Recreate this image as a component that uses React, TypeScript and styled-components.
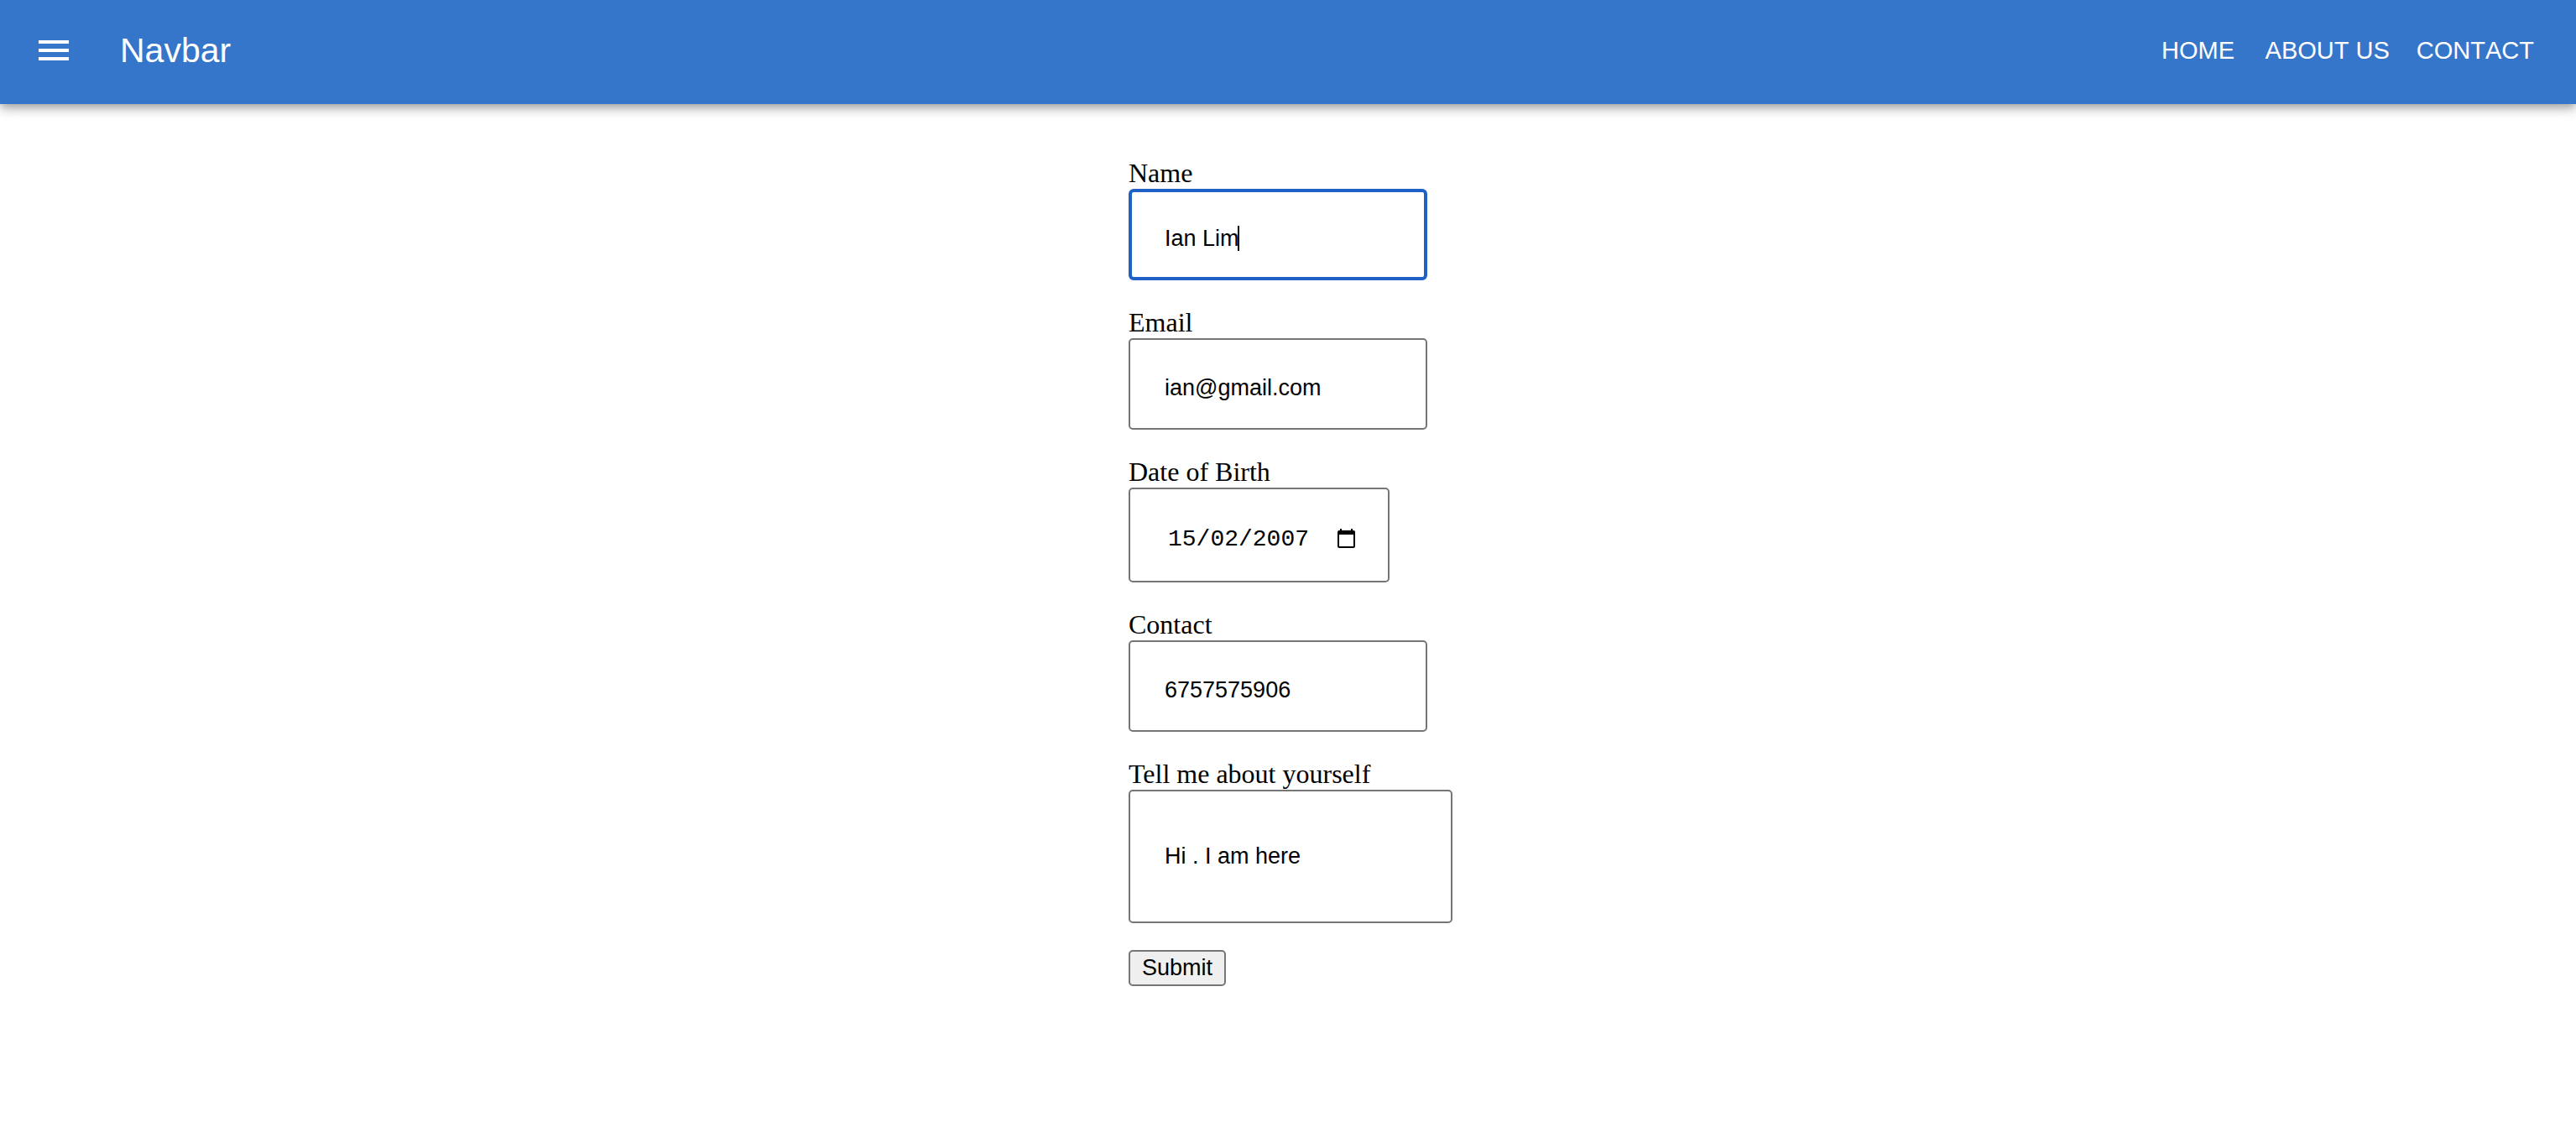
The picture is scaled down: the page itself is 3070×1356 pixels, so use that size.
import React from 'react';
import styled, { createGlobalStyle } from 'styled-components';

const sans = '"Liberation Sans", Arial, Helvetica, sans-serif';

const GlobalStyle = createGlobalStyle`
  *, *::before, *::after { box-sizing: border-box; }
  body {
    margin: 0;
    background: #fff;
    color: #000;
    font-family: "Liberation Serif", "Times New Roman", serif;
    font-size: 32px;
    line-height: 37px;
  }
`;

const AppBar = styled.header`
  display: flex;
  align-items: center;
  height: 124px;
  padding: 0 34px 4px 40px;
  background: #3576cb;
  color: #fff;
  font-family: ${sans};
  box-shadow:
    0 4px 8px -2px rgba(0, 0, 0, 0.2),
    0 8px 10px 0 rgba(0, 0, 0, 0.14),
    0 2px 20px 0 rgba(0, 0, 0, 0.12);
`;

const MenuButton = styled.button`
  display: flex;
  margin: 0 55px 0 0;
  padding: 0;
  border: 0;
  background: none;
  color: inherit;
`;

const Brand = styled.div`
  flex: 1;
  font-size: 41px;
  line-height: 64px;
`;

const Nav = styled.nav`
  display: flex;
`;

const NavLink = styled.a`
  min-width: 128px;
  padding: 0 16px;
  color: inherit;
  font-size: 29px;
  line-height: 48px;
  font-kerning: none;
  text-align: center;
  text-decoration: none;
  text-transform: uppercase;
`;

const Main = styled.main`
  display: flex;
  justify-content: center;
  padding: 64px 0;
`;

const Form = styled.form`
  display: flex;
  flex-direction: column;
  align-items: flex-start;
  gap: 32px;
  width: 380px;
`;

const Field = styled.div`
  display: flex;
  flex-direction: column;
  align-items: flex-start;
`;

const Control = styled.div`
  position: relative;
`;

const TextInput = styled.input<{ $active?: boolean }>`
  display: block;
  width: 356px;
  height: 109px;
  margin: 0;
  padding: 43px 40px 33px 41px;
  border: 2px solid #767676;
  border-radius: 5px;
  outline: none;
  background: #fff;
  color: #000;
  font-family: ${sans};
  font-size: 27px;
  line-height: 29px;
  ${({ $active }) =>
    $active &&
    `
    padding: 41px 38px 31px 39px;
    border: 4px solid #2061c8;
    border-radius: 6px;
    caret-color: transparent;
  `}
`;

const Caret = styled.span`
  position: absolute;
  top: 44px;
  left: 130px;
  width: 2px;
  height: 30px;
  background: #000;
`;

const DateBox = styled.div`
  display: flex;
  align-items: center;
  justify-content: space-between;
  width: 311px;
  height: 113px;
  padding: 8px 39px 0 45px;
  border: 2px solid #767676;
  border-radius: 5px;
`;

const DateInput = styled.input`
  width: 180px;
  padding: 2px 0 0;
  border: 0;
  outline: none;
  background: none;
  color: #000;
  font-family: "Liberation Mono", "Courier New", monospace;
  font-size: 28px;
  line-height: 32px;
`;

const PickerButton = styled.button`
  display: flex;
  padding: 0;
  border: 0;
  background: none;
  color: #000;
`;

const TextArea = styled.textarea`
  display: block;
  width: 386px;
  height: 159px;
  margin: 0;
  padding: 62px 40px 33px 41px;
  border: 2px solid #767676;
  border-radius: 5px;
  outline: none;
  overflow: hidden;
  resize: none;
  color: #000;
  font-family: ${sans};
  font-size: 27px;
  line-height: 30px;
`;

const SubmitButton = styled.button`
  height: 43px;
  padding: 0 14px;
  border: 2px solid #767676;
  border-radius: 5px;
  background: #efefef;
  color: #000;
  font-family: ${sans};
  font-size: 27px;
  line-height: 39px;
`;

const links = ['Home', 'About us', 'Contact'];

export default function App() {
  return (
    <>
      <GlobalStyle />
      <AppBar>
        <MenuButton type="button" aria-label="menu">
          <svg width="48" height="48" viewBox="0 0 24 24" fill="currentColor">
            <path d="M3 18h18v-2H3v2zm0-5h18v-2H3v2zm0-7v2h18V6H3z" />
          </svg>
        </MenuButton>
        <Brand>Navbar</Brand>
        <Nav>
          {links.map((link) => (
            <NavLink key={link} href="#">
              {link}
            </NavLink>
          ))}
        </Nav>
      </AppBar>
      <Main>
        <Form onSubmit={(event) => event.preventDefault()}>
          <Field>
            <label htmlFor="name">Name</label>
            <Control>
              <TextInput id="name" type="text" defaultValue="Ian Lim" $active />
              <Caret />
            </Control>
          </Field>
          <Field>
            <label htmlFor="email">Email</label>
            <TextInput id="email" type="email" defaultValue="ian@gmail.com" />
          </Field>
          <Field>
            <label htmlFor="dob">Date of Birth</label>
            <DateBox>
              <DateInput id="dob" type="text" inputMode="numeric" defaultValue="15/02/2007" />
              <PickerButton type="button" aria-label="Show date picker">
                <svg width="21" height="24" viewBox="0 0 21 24" fill="currentColor">
                  <path
                    fillRule="evenodd"
                    d="M3 0h2v2h11V0h2v2h1a2 2 0 0 1 2 2v17a2 2 0 0 1-2 2H2a2 2 0 0 1-2-2V4a2 2 0 0 1 2-2h1zM2 7v14h17V7z"
                  />
                </svg>
              </PickerButton>
            </DateBox>
          </Field>
          <Field>
            <label htmlFor="contact">Contact</label>
            <TextInput id="contact" type="tel" defaultValue="6757575906" />
          </Field>
          <Field>
            <label htmlFor="about">Tell me about yourself</label>
            <TextArea id="about" rows={2} defaultValue="Hi . I am here" />
          </Field>
          <SubmitButton type="submit">Submit</SubmitButton>
        </Form>
      </Main>
    </>
  );
}
